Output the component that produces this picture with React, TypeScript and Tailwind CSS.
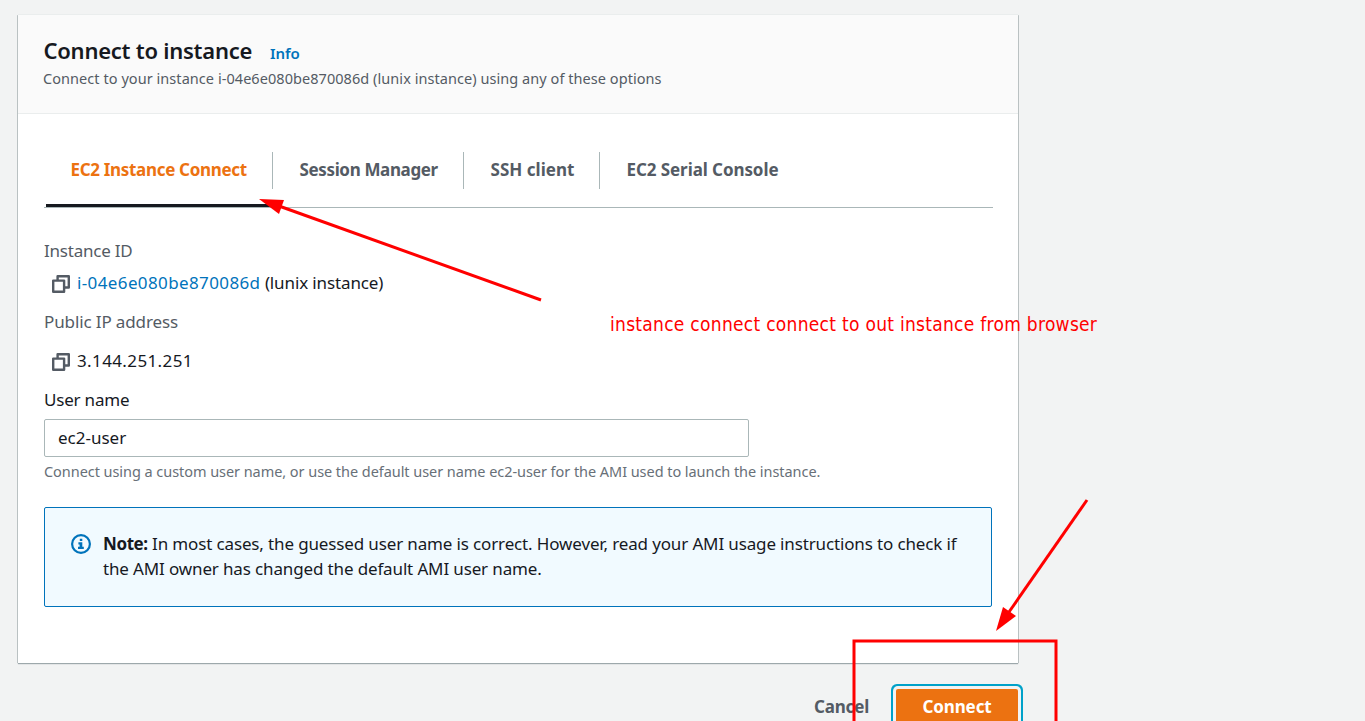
import React from "react";

function CopyIcon() {
  return (
    <svg className="mt-[4px] size-[18px] shrink-0" viewBox="0 0 18 18" fill="none" stroke="#545b64" strokeWidth="2.4">
      <path d="M1.2 5.6h10.9v11.2H1.2z" strokeLinejoin="round" />
      <path d="M5.6 5.6V1.2h11.2v11.3h-4.7" strokeLinejoin="round" />
    </svg>
  );
}

function InfoIcon() {
  return (
    <svg className="mt-[2px] size-5 shrink-0" viewBox="0 0 20 20" fill="none" stroke="#0073bb">
      <circle cx="10" cy="10" r="8.9" strokeWidth="2.2" />
      <path d="M8.8 4.8h2.5v2.3H8.8zM7.4 8.3h3.9v4.4h1.5v2.2H7V12.7h1.6v-2.2H7.4z" fill="#0073bb" stroke="none" />
    </svg>
  );
}

interface TabProps {
  label: string;
  className: string;
  active?: boolean;
  last?: boolean;
}

function Tab({ label, className, active = false, last = false }: TabProps) {
  return (
    <div className={`flex shrink-0 flex-col ${className}`}>
      <div
        className={`flex h-[37px] items-center pb-[2px] text-[17px] font-bold whitespace-nowrap ${
          active ? "text-[#ec7211]" : "text-[#545b64]"
        } ${last ? "" : "border-r border-[#aab7b8]"}`}
      >
        <span className="pl-[26.5px]">{label}</span>
      </div>
      {active && <div className="mt-[15px] ml-[2px] h-[3px] bg-[#16191f]" />}
    </div>
  );
}

function Annotations() {
  return (
    <>
      <svg className="pointer-events-none absolute inset-0 h-[721px] w-[1365px]" viewBox="0 0 1365 721" fill="none">
        <g stroke="#ff0000" strokeWidth="3">
          <path d="M541 300 279 206" />
          <path d="M1087 500 1009 612" />
          <path d="M854 724V641h202v83" />
        </g>
        <path d="M259 199 284 200 279 214z" fill="#ff0000" />
        <path d="M996 631 1003 607 1016 616z" fill="#ff0000" />
      </svg>
      <p className="absolute top-[312px] left-[610px] font-['DejaVu_Sans_Condensed','DejaVu_Sans',sans-serif] text-[19px] leading-6 tracking-[0.28px] whitespace-nowrap text-[#ff0000]">
        instance connect connect to out instance from browser
      </p>
    </>
  );
}

export default function App() {
  return (
    <div className="relative h-[721px] w-[1365px] overflow-hidden bg-[#f2f3f3] pt-[15px] pl-[18px] font-['Noto_Sans',sans-serif] text-[17px] leading-6 text-[#16191f]">
      <main className="h-[648px] w-[1000px] bg-white shadow-[0_1px_1px_0_rgba(0,28,36,0.35),1px_0_0_0_#c6cccd,-1px_0_0_0_#c6cccd,0_-1px_0_0_#eaeded]">
        <header className="h-[99px] border-b border-[#eaeded] bg-[#fafafa] pt-[21px] pl-[25px]">
          <div className="flex h-7 items-center">
            <h1 className="w-[227px] pl-[0.5px] text-[22px] font-semibold tracking-[-0.25px] whitespace-nowrap">Connect to instance</h1>
            <a className="pt-[5px] text-[15px] font-semibold tracking-[-0.1px] text-[#0073bb]">Info</a>
          </div>
          <p className="mt-[4px] text-[14.5px] leading-5 tracking-[0.055px] whitespace-nowrap text-[#545b64]">
            Connect to your instance i-04e6e080be870086d (lunix instance) using any of these options
          </p>
        </header>

        <nav className="mt-[38px] ml-[26px] flex h-[56px] w-[949px] border-b border-[#aab7b8]">
          <Tab label="EC2 Instance Connect" className="w-[229px] tracking-[-0.32px]" active />
          <Tab label="Session Manager" className="w-[191px] tracking-[-0.36px]" />
          <Tab label="SSH client" className="w-[136px] tracking-[0.03px]" />
          <Tab label="EC2 Serial Console" className="w-[200px] tracking-[-0.08px]" last />
        </nav>

        <section className="ml-[26px] pt-[31px] whitespace-nowrap">
          <div className="tracking-[-0.22px] text-[#545b64]">Instance ID</div>
          <div className="mt-[8px] flex gap-[7px] pl-2">
            <CopyIcon />
            <div>
              <a className="tracking-[0.38px] text-[#0073bb]">i-04e6e080be870086d</a>{" "}
              <span className="tracking-[-0.12px]">(lunix instance)</span>
            </div>
          </div>
          <div className="mt-[15px] tracking-[-0.12px] text-[#545b64]">Public IP address</div>
          <div className="mt-[15px] flex gap-[7px] pl-2">
            <CopyIcon />
            <div className="tracking-[0.38px]">3.144.251.251</div>
          </div>
          <div className="mt-[15px] tracking-[-0.2px]">User name</div>
          <div className="mt-[7px] flex h-[38px] w-[705px] items-center rounded-[2px] border border-[#aab7b8] pl-[13px]">
            ec2-user
          </div>
          <p className="mt-[4px] text-[14.5px] leading-5 tracking-[-0.055px] text-[#687078]">
            Connect using a custom user name, or use the default user name ec2-user for the AMI used to launch the instance.
          </p>
          <div className="mt-[26px] flex h-[100px] w-[948px] gap-[12px] rounded-[2px] border border-[#0073bb] bg-[#f1faff] pt-[24px] pl-[26px] leading-[25px]">
            <InfoIcon />
            <div className="-mt-px tracking-[-0.14px]">
              <div>
                <b className="font-bold tracking-[-0.4px]">Note:</b>{" "}
                <span>In most cases, the guessed user name is correct. However, read your AMI usage instructions to check if</span>
              </div>
              <div>the AMI owner has changed the default AMI user name.</div>
            </div>
          </div>
        </section>
      </main>

      <footer className="mt-[26px] flex w-[1000px] items-start justify-end text-[17px] font-bold tracking-[-0.1px]">
        <button className="mr-[27px] h-[36px] tracking-[-0.2px] text-[#545b64]">Cancel</button>
        <button className="h-[36px] w-[122px] rounded-[2px] bg-[#ec7211] text-white shadow-[0_0_0_3px_#f2f3f3,0_0_0_5px_#00a1c9]">
          Connect
        </button>
      </footer>

      <Annotations />
    </div>
  );
}
